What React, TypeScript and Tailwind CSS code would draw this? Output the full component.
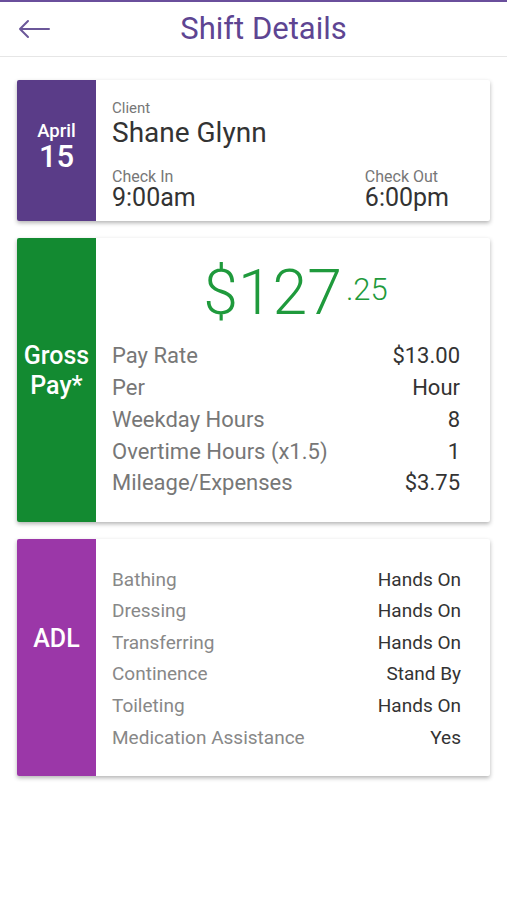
import React from "react";

const payRows = [
  { label: "Pay Rate", value: "$13.00" },
  { label: "Per", value: "Hour" },
  { label: "Weekday Hours", value: "8" },
  { label: "Overtime Hours (x1.5)", value: "1" },
  { label: "Mileage/Expenses", value: "$3.75" },
];

const adlRows = [
  { label: "Bathing", value: "Hands On" },
  { label: "Dressing", value: "Hands On" },
  { label: "Transferring", value: "Hands On" },
  { label: "Continence", value: "Stand By" },
  { label: "Toileting", value: "Hands On" },
  { label: "Medication Assistance", value: "Yes" },
];

function BackArrow() {
  return (
    <svg width="32" height="20" viewBox="0 0 32 20" fill="none">
      <path
        d="M31 10H2M10 2L2 10L10 18"
        stroke="#6b5799"
        strokeWidth="2"
        strokeLinecap="round"
        strokeLinejoin="round"
      />
    </svg>
  );
}

export default function App() {
  return (
    <div
      className="min-h-[900px] w-[507px] bg-white"
      style={{ fontFamily: "Roboto, 'Noto Sans', sans-serif" }}
    >
      {/* header */}
      <div className="relative flex h-[57px] items-center justify-center border-t-2 border-b border-t-[#6a4f9c] border-b-[#e6e6e6] bg-white">
        <button className="absolute left-[18px] top-[17px]">
          <BackArrow />
        </button>
        <h1 className="ml-[20px] text-[31px] leading-[34px] text-[#5e4592]">Shift Details</h1>
      </div>

      <div className="flex flex-col gap-[17px] px-[17px] pt-[23px]">
        {/* shift card */}
        <div className="flex h-[141px] overflow-hidden rounded-[2px] bg-white shadow-[0_2px_4px_rgba(0,0,0,0.3)]">
          <div className="flex w-[79px] shrink-0 flex-col items-center bg-[#5a3c88] pt-[40px] text-white">
            <div className="text-[18.5px] font-medium leading-[22px]">April</div>
            <div className="text-[31px] font-medium leading-[30px]">15</div>
          </div>
          <div className="flex flex-1 flex-col pl-[16px] pt-[20px] pr-[41px]">
            <div className="text-[15px] leading-[16px] text-[#777]">Client</div>
            <div className="mt-[2px] text-[28px] leading-[30px] text-[#333]">Shane Glynn</div>
            <div className="mt-[21px] flex justify-between">
              <div>
                <div className="text-[16px] leading-[16px] text-[#777]">Check In</div>
                <div className="text-[25px] leading-[25px] text-[#333]">9:00am</div>
              </div>
              <div>
                <div className="text-[16px] leading-[16px] text-[#777]">Check Out</div>
                <div className="text-[25px] leading-[25px] text-[#333]">6:00pm</div>
              </div>
            </div>
          </div>
        </div>

        {/* gross pay card */}
        <div className="flex h-[284px] overflow-hidden rounded-[2px] bg-white shadow-[0_2px_4px_rgba(0,0,0,0.3)]">
          <div className="flex w-[79px] shrink-0 flex-col items-center bg-[#138a31] pt-[103px] text-center text-[25px] font-medium leading-[30px] text-white">
            <div>Gross</div>
            <div>Pay*</div>
          </div>
          <div className="flex flex-1 flex-col pl-[16px] pr-[30px] pt-[24px]">
            <div className="flex justify-center pl-[19px] text-[#1f9a3c]">
              <span className="text-[62.5px] font-light leading-[62px]">$127</span>
              <span className="ml-[4px] mt-[13px] text-[31px] font-light leading-[30px]">.25</span>
            </div>
            <div className="mt-[16px] flex flex-col">
              {payRows.map((r) => (
                <div key={r.label} className="flex h-[31.75px] items-center justify-between text-[22px]">
                  <span className="text-[#777]">{r.label}</span>
                  <span className="text-[#333]">{r.value}</span>
                </div>
              ))}
            </div>
          </div>
        </div>

        {/* ADL card */}
        <div className="flex h-[237px] overflow-hidden rounded-[2px] bg-white shadow-[0_2px_4px_rgba(0,0,0,0.3)]">
          <div className="flex w-[79px] shrink-0 flex-col items-center bg-[#9b37a8] pt-[85px] text-[25px] font-medium leading-[30px] text-white">
            ADL
          </div>
          <div className="flex flex-1 flex-col pl-[16px] pr-[29px] pt-[25px]">
            {adlRows.map((r) => (
              <div key={r.label} className="flex h-[31.6px] items-center justify-between text-[19px]">
                <span className="text-[#888]">{r.label}</span>
                <span className="text-[#333]">{r.value}</span>
              </div>
            ))}
          </div>
        </div>
      </div>
    </div>
  );
}
